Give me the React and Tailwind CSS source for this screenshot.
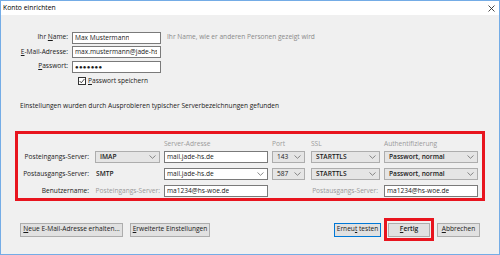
import React from "react";

const Chev = () => (
  <svg width="7" height="4" viewBox="0 0 7 4" className="shrink-0">
    <polyline points="0.5,0.5 3.5,3.3 6.5,0.5" fill="none" stroke="#6d6d6d" strokeWidth="0.8" />
  </svg>
);

const Select = ({ w, children, ml }) => (
  <div className={`h-[12px] border border-[#adadad] bg-[#e5e5e5] flex items-center justify-between pl-[4px] pr-[3px] font-semibold ${w} ${ml}`}>
    <span className="whitespace-nowrap">{children}</span>
    <Chev />
  </div>
);

const Input = ({ w, children, ml, chev }) => (
  <div className={`h-[12px] border border-[#7a7a7a] bg-white flex items-center justify-between pl-[2px] pr-[3px] ${w} ${ml}`}>
    <span className="whitespace-nowrap overflow-hidden leading-[10px]">{children}</span>
    {chev && <Chev />}
  </div>
);

const Btn = ({ children, w, extra = "", bc = "border-[#adadad]" }) => (
  <div className={`h-[14px] border ${bc} bg-[#e1e1e1] flex items-center justify-center whitespace-nowrap ${w} ${extra}`}>
    {children}
  </div>
);

export default function App() {
  return (
    <div
      className="w-[500px] h-[255px] border border-[#74ace6] bg-[#f0f0f0] flex flex-col text-[6.6px] text-[#1a1a1a] leading-none overflow-hidden"
      style={{ fontFamily: '"Open Sans", "Noto Sans", sans-serif' }}
    >
      <div className="h-[14px] bg-white flex items-center justify-between pl-[2px] pr-[4px] shrink-0">
        <span className="text-[6.8px] text-black">Konto einrichten</span>
        <svg width="7" height="7" viewBox="0 0 7 7">
          <path d="M0.5 0.5L6.5 6.5M6.5 0.5L0.5 6.5" stroke="#333" strokeWidth="0.9" />
        </svg>
      </div>

      <div className="flex flex-col">
        <div className="mt-[16px] flex flex-col gap-[1.5px]">
          <div className="flex items-center h-[13px]">
            <div className="w-[67px] text-right whitespace-nowrap">Ihr <u>N</u>ame:</div>
            <Input w="w-[89px]" ml="ml-[4px]">Max Mustermann</Input>
            <div className="ml-[6px] text-[#8a8a8a] whitespace-nowrap">Ihr Name, wie er anderen Personen gezeigt wird</div>
          </div>
          <div className="flex items-center h-[13px]">
            <div className="w-[67px] text-right whitespace-nowrap"><u>E</u>-Mail-Adresse:</div>
            <Input w="w-[89px]" ml="ml-[4px]">max.mustermann@jade-hs.de</Input>
          </div>
          <div className="flex items-center h-[13px]">
            <div className="w-[67px] text-right whitespace-nowrap"><u>P</u>asswort:</div>
            <Input w="w-[89px]" ml="ml-[4px]"><span className="tracking-[0.3px] text-[6px]">●●●●●●●</span></Input>
          </div>
        </div>
        <div className="mt-[3px] ml-[77px] flex items-center gap-[2px] h-[10px]">
          <div className="w-[8px] h-[8px] border border-[#333] bg-white flex items-center justify-center">
            <svg width="6" height="6" viewBox="0 0 6 6">
              <polyline points="0.6,3 2.3,4.8 5.4,1" fill="none" stroke="#222" strokeWidth="0.8" />
            </svg>
          </div>
          <span><u>P</u>asswort speichern</span>
        </div>

        <div className="mt-[15px] ml-[19px] h-[10px] flex items-center whitespace-nowrap">
          Einstellungen wurden durch Ausprobieren typischer Serverbezeichnungen gefunden
        </div>

        <div className="mt-[20px] ml-[14px] w-[470px] h-[70px] border-[3px] border-[#e8141e] flex flex-col">
          <div className="mt-[5px] h-[10px] flex items-center text-[#9a9a9a]">
            <div className="ml-[146px] w-[104px]">Server-Adresse</div>
            <div className="ml-[4px] w-[33px]">Port</div>
            <div className="ml-[6px] w-[69px]">SSL</div>
            <div className="ml-[4px] w-[94px]">Authentifizierung</div>
          </div>
          <div className="mt-[2px] flex items-center h-[12px]">
            <div className="w-[71px] text-right whitespace-nowrap">Posteingangs-Server:</div>
            <Select w="w-[65px]" ml="ml-[6px]">IMAP</Select>
            <Input w="w-[104px]" ml="ml-[4px]">mail.jade-hs.de</Input>
            <Select w="w-[33px]" ml="ml-[4px]"><span className="font-normal">143</span></Select>
            <Select w="w-[69px]" ml="ml-[6px]">STARTTLS</Select>
            <Select w="w-[94px]" ml="ml-[4px]">Passwort, normal</Select>
          </div>
          <div className="mt-[5px] flex items-center h-[12px]">
            <div className="w-[71px] text-right whitespace-nowrap">Postausgangs-Server:</div>
            <div className="ml-[6px] w-[65px] pl-[1px] font-semibold">SMTP</div>
            <Input w="w-[104px]" ml="ml-[4px]" chev>mail.jade-hs.de</Input>
            <Select w="w-[33px]" ml="ml-[4px]"><span className="font-normal">587</span></Select>
            <Select w="w-[69px]" ml="ml-[6px]">STARTTLS</Select>
            <Select w="w-[94px]" ml="ml-[4px]">Passwort, normal</Select>
          </div>
          <div className="mt-[5px] flex items-center h-[12px]">
            <div className="w-[71px] text-right whitespace-nowrap">Benutzername:</div>
            <div className="ml-[6px] w-[65px] text-right text-[#9a9a9a] whitespace-nowrap">Posteingangs-Server:</div>
            <Input w="w-[104px]" ml="ml-[4px]">ma1234@hs-woe.de</Input>
            <div className="ml-[43px] w-[67px] text-right text-[#9a9a9a] whitespace-nowrap">Postausgangs-Server:</div>
            <Input w="w-[94px]" ml="ml-[6px]">ma1234@hs-woe.de</Input>
          </div>
        </div>

        <div className="mt-[17px] flex items-center">
          <Btn w="w-[103px]" extra="ml-[19px]"><span><u>N</u>eue E-Mail-Adresse erhalten...</span></Btn>
          <Btn w="w-[80px]" extra="ml-[7px]"><span><u>E</u>rweiterte Einstellungen</span></Btn>
          <Btn w="w-[47px]" extra="ml-[124px]" bc="border-[#0078d7]"><span>Erneu<u>t</u> testen</span></Btn>
          <div className="ml-[3px] border-[3px] border-[#e8141e] px-[1px] py-[1.5px]">
            <Btn w="w-[42px]"><span className="font-semibold"><u>F</u>ertig</span></Btn>
          </div>
          <Btn w="w-[43px]" extra="ml-[3px]"><span><u>A</u>bbrechen</span></Btn>
        </div>
      </div>
    </div>
  );
}
